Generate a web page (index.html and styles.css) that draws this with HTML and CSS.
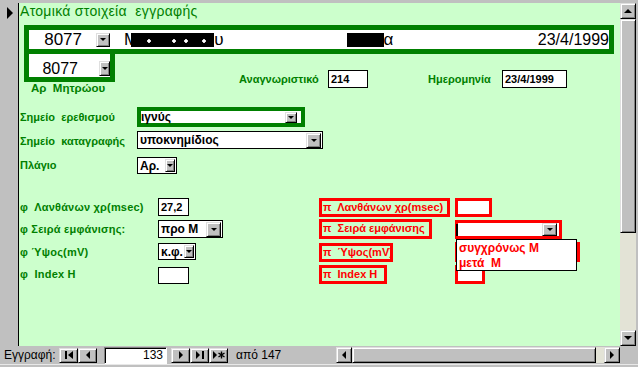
FILE: index.html
```html
<!DOCTYPE html>
<html lang="el">
  <head>
    <meta charset="UTF-8" />
    <title>Ατομικά στοιχεία εγγραφής</title>
    <link rel="stylesheet" href="styles.css">
  </head>
  <body>
    <div class="top-edge"></div>
    <div class="main">
      <div class="selector"><span class="current"></span></div>

      <div class="form">
        <h1 class="title">Ατομικά στοιχεία&nbsp; εγγραφής</h1>

        <div class="id-bar">
          <span class="id-num">8077</span>
          <span class="drop-btn"></span>
          <span class="name">Μ<span class="redact first"></span>υ</span>
          <span class="surname"><span class="redact second"></span>α</span>
          <span class="id-date">23/4/1999</span>
        </div>

        <div class="id-row">
          <div class="id-box">
            <span class="id-num small">8077</span>
            <span class="drop-btn slim"></span>
          </div>
          <div class="meta">
            <span class="label meta-id">Αναγνωριστικό</span>
            <span class="textbox w40">214</span>
            <span class="label meta-date">Ημερομηνία</span>
            <span class="textbox w65">23/4/1999</span>
          </div>
        </div>
        <div class="label id-caption">Αρ&nbsp; Μητρώου</div>

        <div class="site-grid">
          <span class="label">Σημείο&nbsp; ερεθισμού</span>
          <span class="combo framed">
            <span class="combo-text">ιγνύς</span>
            <span class="drop-btn small"></span>
          </span>

          <span class="label">Σημείο&nbsp; καταγραφής</span>
          <span class="combo w186">
            <span class="combo-text">υποκνημίδιος</span>
            <span class="drop-btn"></span>
          </span>

          <span class="label">Πλάγιο</span>
          <span class="combo w40 short">
            <span class="combo-text">Αρ.</span>
            <span class="drop-btn narrow"></span>
          </span>
        </div>

        <div class="latency-grid">
          <span class="label">φ&nbsp; Λανθάνων χρ(msec)</span>
          <span class="textbox w31">27,2</span>
          <span class="red-label w131">π&nbsp; Λανθάνων χρ(msec)</span>
          <span class="red-field w37"></span>

          <span class="label">φ Σειρά εμφάνισης:</span>
          <span class="combo w65">
            <span class="combo-text">προ Μ</span>
            <span class="drop-btn"></span>
          </span>
          <span class="red-label w113 tall">π&nbsp; Σειρά εμφάνισης</span>
          <span class="red-field red-combo w107">
            <span class="caret"></span>
            <span class="drop-btn"></span>
            <span class="dropdown">
              <span class="option">συγχρόνως Μ</span>
              <span class="option">μετά&nbsp; Μ</span>
            </span>
          </span>

          <span class="label">φ Ύψος(mV)</span>
          <span class="combo w38 short">
            <span class="combo-text">κ.φ.</span>
            <span class="drop-btn narrow"></span>
          </span>
          <span class="red-label w74">π&nbsp; Ύψος(mV)</span>
          <span class="red-field w125 tall"></span>

          <span class="label">φ&nbsp; Index H</span>
          <span class="textbox w31 short lower"></span>
          <span class="red-label w68">π&nbsp; Index H</span>
          <span class="red-field w30"></span>
        </div>
      </div>

      <div class="vscroll">
        <span class="scroll-btn"><span class="arrow up"></span></span>
        <span class="scroll-thumb v"></span>
        <span class="scroll-track"></span>
        <span class="scroll-btn"><span class="arrow down"></span></span>
      </div>
    </div>

    <div class="navbar">
      <span class="nav-label">Εγγραφή:</span>
      <span class="nav-btn">
        <svg width="8" height="8" viewBox="0 0 8 8"><rect x="0" y="0" width="2" height="8"/><path d="M8 0V8L3 4Z"/></svg>
      </span>
      <span class="nav-btn">
        <svg width="8" height="8" viewBox="0 0 8 8"><path d="M6 0V8L2 4Z"/></svg>
      </span>
      <span class="record">133</span>
      <span class="nav-btn">
        <svg width="8" height="8" viewBox="0 0 8 8"><path d="M2 0V8L6 4Z"/></svg>
      </span>
      <span class="nav-btn">
        <svg width="8" height="8" viewBox="0 0 8 8"><path d="M0 0V8L4 4Z"/><rect x="6" y="0" width="2" height="8"/></svg>
      </span>
      <span class="nav-btn">
        <svg width="12" height="8" viewBox="0 0 12 8"><path d="M0 0V8L4 4Z"/><path d="M8.5 0.5V7.5M5.5 2L11.5 6M5.5 6L11.5 2" stroke="#000" stroke-width="1.4" fill="none"/></svg>
      </span>
      <span class="of">από 147</span>

      <div class="hscroll">
        <span class="scroll-btn"><span class="arrow left"></span></span>
        <span class="scroll-thumb h"></span>
        <span class="scroll-track"></span>
        <span class="scroll-btn"><span class="arrow right"></span></span>
      </div>
    </div>
    <div class="bottom-edge"></div>
  </body>
</html>
```

FILE: styles.css
```css
* {
  box-sizing: border-box;
}

body {
  margin: 0;
  width: 638px;
  height: 367px;
  overflow: hidden;
  background: #c0c0c0;
  font-family: "Liberation Sans", Arial, sans-serif;
  color: #000;
}

.top-edge {
  height: 3px;
}

.main {
  display: flex;
  height: 343px;
}

/* record selector column */
.selector {
  width: 19px;
  padding: 4px 0 0 7px;
  border-right: 1px solid #000;
}

.current {
  display: block;
  width: 0;
  height: 0;
  border-top: 6px solid transparent;
  border-bottom: 6px solid transparent;
  border-left: 6px solid #000;
}

.form {
  flex: 1;
  background: #ccffcc;
  color: #008000;
}

.title {
  margin: 0;
  height: 22px;
  padding-left: 1px;
  font-size: 14px;
  font-weight: normal;
  letter-spacing: 0.3px;
  line-height: 16px;
}

/* 3d gray buttons */
.drop-btn,
.nav-btn,
.scroll-btn,
.scroll-thumb {
  flex: none;
  background: #c0c0c0;
  border: 1px solid;
  border-color: #dfdfdf #000 #000 #dfdfdf;
  box-shadow: inset 1px 1px #fff, inset -1px -1px #808080;
}

.drop-btn {
  display: flex;
  align-items: center;
  justify-content: center;
  width: 15px;
  height: 15px;
  margin-right: 1px;
}

.drop-btn::after {
  content: "";
  border-top: 3px solid #000;
  border-left: 3px solid transparent;
  border-right: 3px solid transparent;
}

.drop-btn.slim {
  width: 11px;
  height: 15px;
  margin: 0 0 1px;
}

.drop-btn.small {
  width: 12px;
  height: 11px;
  margin-right: 4px;
}

.drop-btn.narrow {
  width: 10px;
  height: 13px;
}

/* top identity bar */
.id-bar {
  display: flex;
  align-items: center;
  width: 590px;
  height: 29px;
  margin-left: 5px;
  border: 5px solid #008000;
  background: #fff;
  color: #000;
  font-size: 17px;
}

.id-bar .drop-btn {
  width: 14px;
  height: 14px;
}

.id-num {
  width: 67px;
  padding-right: 14px;
  text-align: right;
}

.id-num.small {
  width: 70px;
  padding-right: 21px;
  font-size: 16px;
  line-height: 16px;
}

.name {
  margin-left: 13px;
  white-space: nowrap;
}

.redact {
  display: inline-block;
  height: 14px;
  vertical-align: -2px;
  background: #000;
}

.redact.first {
  width: 83px;
  margin-left: -7px;
  background:
    radial-gradient(circle at 18px 8px, #fff 1.5px, transparent 2px),
    radial-gradient(circle at 43px 8px, #fff 1.5px, transparent 2px),
    radial-gradient(circle at 55px 8px, #fff 1.5px, transparent 2px),
    radial-gradient(circle at 73px 8px, #fff 1.5px, transparent 2px),
    #000;
}

.redact.second {
  width: 37px;
  margin-right: -1px;
}

.surname {
  margin-left: 124px;
}

.id-date {
  margin-left: auto;
  font-size: 16px;
}

.id-row {
  display: flex;
  height: 28px;
  margin-left: 5px;
}

.id-box {
  display: flex;
  align-items: flex-end;
  width: 91px;
  height: 28px;
  border: 5px solid #008000;
  border-top: 0;
  background: #fff;
  color: #000;
}

.meta {
  display: flex;
  align-items: center;
  height: 18px;
  margin: 16px 0 0 124px;
}

.label {
  font-size: 11px;
  font-weight: bold;
  white-space: nowrap;
}

.meta-id {
  width: 89px;
}

.meta-date {
  width: 74px;
  margin-left: 60px;
}

.textbox {
  display: block;
  height: 18px;
  padding-left: 2px;
  border: 1px solid #000;
  background: #fff;
  color: #000;
  font-size: 11px;
  font-weight: bold;
  line-height: 16px;
}

.textbox.short {
  height: 17px;
}

.textbox.lower {
  margin-top: 2px;
}

.id-caption {
  height: 12px;
  margin-left: 12px;
  line-height: 12px;
  font-size: 11.5px;
}

/* combo boxes */
.combo {
  display: flex;
  align-items: center;
  height: 18px;
  border: 1px solid #000;
  background: #fff;
  color: #000;
  font-size: 12px;
  font-weight: bold;
}

.combo.short {
  height: 17px;
}

.combo-text {
  flex: 1;
  padding-left: 2px;
  overflow: hidden;
  white-space: nowrap;
}

.combo.framed {
  width: 168px;
  height: 20px;
  border: 4px solid #008000;
}

.combo.framed .combo-text {
  padding-left: 0;
}

.w186 { width: 186px; }
.w40 { width: 40px; }
.w65 { width: 65px; }
.w38 { width: 38px; }
.w31 { width: 31px; }

.site-grid {
  display: grid;
  grid-template-columns: 118px auto;
  grid-template-rows: 24px 24px 17px;
  align-items: start;
  justify-items: start;
  margin-top: 13px;
}

.site-grid .label {
  padding-left: 1px;
  line-height: 20px;
}

.site-grid .label:nth-of-type(2) {
  line-height: 18px;
}

.site-grid .label:last-of-type {
  line-height: 15px;
}

.site-grid .short {
  margin-top: 2px;
}

.latency-grid {
  display: grid;
  grid-template-columns: 139px 161px 136px auto;
  grid-template-rows: 22px 23px 22px 22px;
  align-items: start;
  justify-items: start;
  margin-top: 26px;
}

.latency-grid .label {
  padding-left: 1px;
  line-height: 19px;
  letter-spacing: 0.2px;
}

/* red (π) column */
.red-label {
  display: block;
  height: 19px;
  padding-left: 1px;
  overflow: hidden;
  border: 3px solid #f00;
  color: #f00;
  font-size: 11px;
  font-weight: bold;
  line-height: 13px;
  white-space: nowrap;
}

.red-label.tall {
  height: 20px;
  margin-top: -1px;
}

.red-field {
  display: block;
  height: 19px;
  border: 3px solid #f00;
  background: #fff;
}

.red-field.tall {
  height: 20px;
  margin-top: -1px;
}

.w131 { width: 131px; }
.w113 { width: 113px; }
.w74 { width: 74px; }
.w68 { width: 68px; }
.w37 { width: 37px; }
.w107 { width: 107px; }
.w125 { width: 125px; }
.w30 { width: 30px; }

.red-combo {
  position: relative;
  display: flex;
  align-items: center;
  justify-content: space-between;
}

.red-combo .drop-btn {
  height: 13px;
  margin-right: 2px;
}

.caret {
  width: 2px;
  height: 12px;
  margin-left: -2px;
  background: #000;
}

.dropdown {
  position: absolute;
  top: 16px;
  left: -2px;
  z-index: 2;
  display: flex;
  flex-direction: column;
  width: 121px;
  height: 32px;
  padding: 1px 0 0 2px;
  border: 1px solid #000;
  background: #fff;
  color: #f00;
  font-size: 12px;
  font-weight: bold;
  line-height: 15px;
}

/* scrollbars */
.vscroll {
  display: flex;
  flex-direction: column;
  width: 16px;
  margin-right: 2px;
  background: #e3e3d6;
}

.scroll-btn {
  display: flex;
  align-items: center;
  justify-content: center;
  width: 16px;
  height: 16px;
}

.scroll-thumb.v {
  height: 214px;
}

.scroll-track {
  flex: 1;
}

.arrow {
  width: 0;
  height: 0;
}

.arrow.up {
  border-bottom: 4px solid #000;
  border-left: 4px solid transparent;
  border-right: 4px solid transparent;
}

.arrow.down {
  border-top: 4px solid #000;
  border-left: 4px solid transparent;
  border-right: 4px solid transparent;
}

.arrow.left {
  border-right: 4px solid #000;
  border-top: 4px solid transparent;
  border-bottom: 4px solid transparent;
}

.arrow.right {
  border-left: 4px solid #000;
  border-top: 4px solid transparent;
  border-bottom: 4px solid transparent;
}

/* record navigation */
.navbar {
  display: flex;
  align-items: center;
  height: 18px;
  font-size: 12px;
}

.nav-label {
  width: 59px;
  padding-left: 4px;
}

.nav-btn {
  display: flex;
  align-items: center;
  justify-content: center;
  width: 19px;
  height: 15px;
}

.record {
  width: 63px;
  height: 17px;
  margin: 0 4px 0 7px;
  padding-right: 3px;
  border: 1px solid;
  border-color: #808080 #fff #fff #808080;
  box-shadow: inset 1px 1px #000;
  background: #fff;
  line-height: 15px;
  text-align: right;
}

.of {
  margin-left: 8px;
}

.hscroll {
  display: flex;
  width: 284px;
  height: 16px;
  margin: 0 18px 0 auto;
  background: #e3e3d6;
}

.scroll-thumb.h {
  width: 244px;
}

.bottom-edge {
  height: 3px;
  border-top: 1px solid #e8e8e8;
}
```
